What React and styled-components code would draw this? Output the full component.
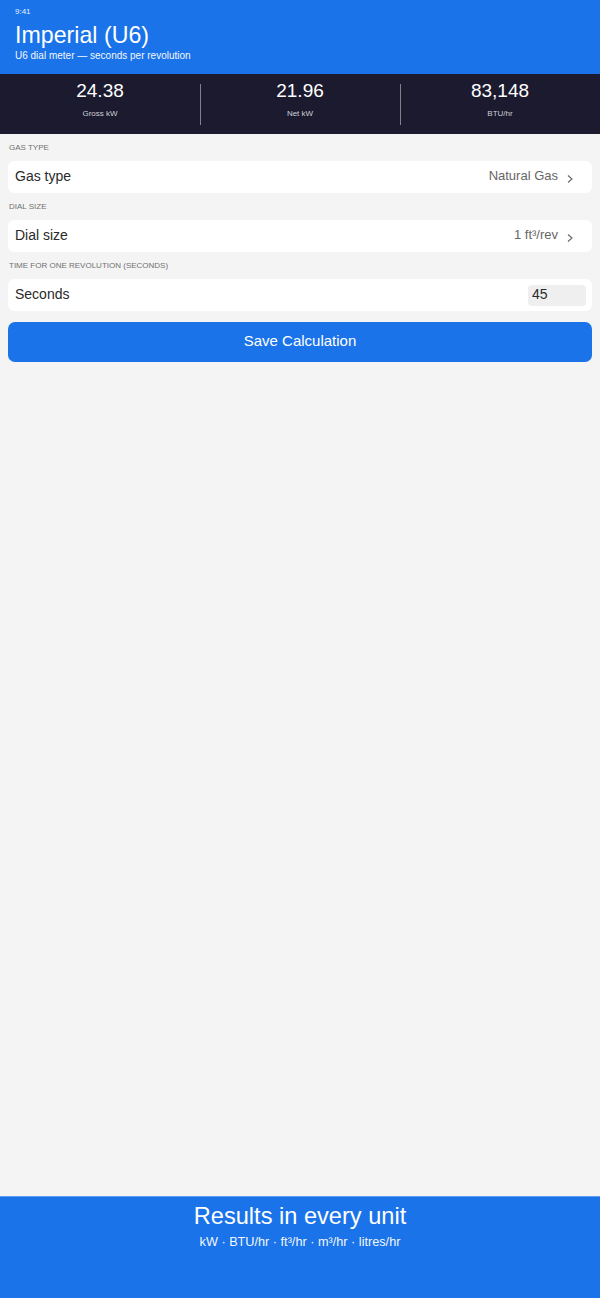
import React from "react";
import styled, { createGlobalStyle } from "styled-components";

const Global = createGlobalStyle`
  html, body { margin: 0; padding: 0; }
  body {
    font-family: "Liberation Sans", Arial, Helvetica, sans-serif;
    background: #f4f4f4;
    -webkit-font-smoothing: antialiased;
  }
  * { box-sizing: border-box; }
`;

const Page = styled.div`
  display: flex;
  flex-direction: column;
  min-height: 1298px;
  background: #f4f4f4;
`;

const Header = styled.header`
  background: #1a73e8;
  color: #fff;
  padding: 7px 15px 12px;
`;

const Status = styled.div`
  font-size: 8px;
  line-height: 10px;
  opacity: 0.9;
`;

const Title = styled.h1`
  margin: 4px 0 0;
  font-size: 23.2px;
  line-height: 29px;
  font-weight: 400;
`;

const Subtitle = styled.div`
  font-size: 10px;
  line-height: 12px;
  opacity: 0.95;
`;

const StatsBand = styled.section`
  display: grid;
  grid-template-columns: repeat(3, 1fr);
  background: #1b1a2e;
  color: #fff;
  padding: 5px 0 15px;
`;

const Stat = styled.div`
  position: relative;
  display: flex;
  flex-direction: column;
  align-items: center;
  &:not(:first-child)::before {
    content: "";
    position: absolute;
    left: 0;
    top: 5px;
    height: 41px;
    width: 1px;
    background: rgba(255, 255, 255, 0.45);
  }
`;

const StatValue = styled.div`
  font-size: 19px;
  line-height: 24px;
`;

const StatLabel = styled.div`
  margin-top: 6px;
  font-size: 8px;
  line-height: 10px;
  color: #d0d0d8;
`;

const Main = styled.main`
  flex: 1;
  padding: 0 8px;
`;

const Group = styled.div`
  padding-top: 9px;
`;

const GroupLabel = styled.div`
  margin: 0 1px 8px;
  font-size: 8px;
  line-height: 10px;
  color: #707070;
  text-transform: uppercase;
`;

const Card = styled.div`
  display: flex;
  align-items: center;
  height: 32px;
  padding: 0 ${(p) => (p.$input ? 6 : 18)}px 3px 7px;
  background: #fff;
  border-radius: 6px;
`;

const CardLabel = styled.span`
  flex: 1;
  font-size: 14px;
  color: #2a2a2a;
`;

const CardValue = styled.span`
  font-size: 13px;
  color: #666;
`;

const Chevron = styled.svg`
  margin-left: 8px;
  margin-top: 6px;
  width: 8px;
  height: 10px;
`;

const NumberInput = styled.input`
  width: 58px;
  height: 21px;
  margin-top: 3px;
  padding: 0 4px 3px;
  border: none;
  border-radius: 4px;
  background: #efefef;
  font-family: inherit;
  font-size: 14px;
  color: #2a2a2a;
  outline: none;
`;

const SaveButton = styled.button`
  display: block;
  width: 100%;
  height: 40px;
  margin-top: 11px;
  padding: 0 0 4px;
  border: none;
  border-radius: 7px;
  background: #1a73e8;
  color: #fff;
  font-family: inherit;
  font-size: 15px;
`;

const Footer = styled.footer`
  height: 102px;
  background: #1a73e8;
  border-top: 1px solid #5a9cf0;
  color: #fff;
  text-align: center;
  padding-top: 5px;
`;

const FooterTitle = styled.div`
  font-size: 23.6px;
  line-height: 28px;
`;

const FooterSub = styled.div`
  margin-top: 4px;
  font-size: 12.7px;
  line-height: 16px;
  opacity: 0.95;
`;

const ChevronIcon = () => (
  <Chevron viewBox="0 0 8 10">
    <path d="M2 1.5 L6 5 L2 8.5" fill="none" stroke="#666" strokeWidth="1.1" />
  </Chevron>
);

const stats = [
  { value: "24.38", label: "Gross kW" },
  { value: "21.96", label: "Net kW" },
  { value: "83,148", label: "BTU/hr" },
];

export default function App() {
  return (
    <>
      <Global />
      <Page>
        <Header>
          <Status>9:41</Status>
          <Title>Imperial (U6)</Title>
          <Subtitle>U6 dial meter — seconds per revolution</Subtitle>
        </Header>
        <StatsBand>
          {stats.map((s) => (
            <Stat key={s.label}>
              <StatValue>{s.value}</StatValue>
              <StatLabel>{s.label}</StatLabel>
            </Stat>
          ))}
        </StatsBand>
        <Main>
          <Group>
            <GroupLabel>Gas type</GroupLabel>
            <Card>
              <CardLabel>Gas type</CardLabel>
              <CardValue>Natural Gas</CardValue>
              <ChevronIcon />
            </Card>
          </Group>
          <Group>
            <GroupLabel>Dial size</GroupLabel>
            <Card>
              <CardLabel>Dial size</CardLabel>
              <CardValue>1 ft³/rev</CardValue>
              <ChevronIcon />
            </Card>
          </Group>
          <Group>
            <GroupLabel>Time for one revolution (seconds)</GroupLabel>
            <Card $input>
              <CardLabel>Seconds</CardLabel>
              <NumberInput type="text" defaultValue="45" />
            </Card>
          </Group>
          <SaveButton>Save Calculation</SaveButton>
        </Main>
        <Footer>
          <FooterTitle>Results in every unit</FooterTitle>
          <FooterSub>kW · BTU/hr · ft³/hr · m³/hr · litres/hr</FooterSub>
        </Footer>
      </Page>
    </>
  );
}
